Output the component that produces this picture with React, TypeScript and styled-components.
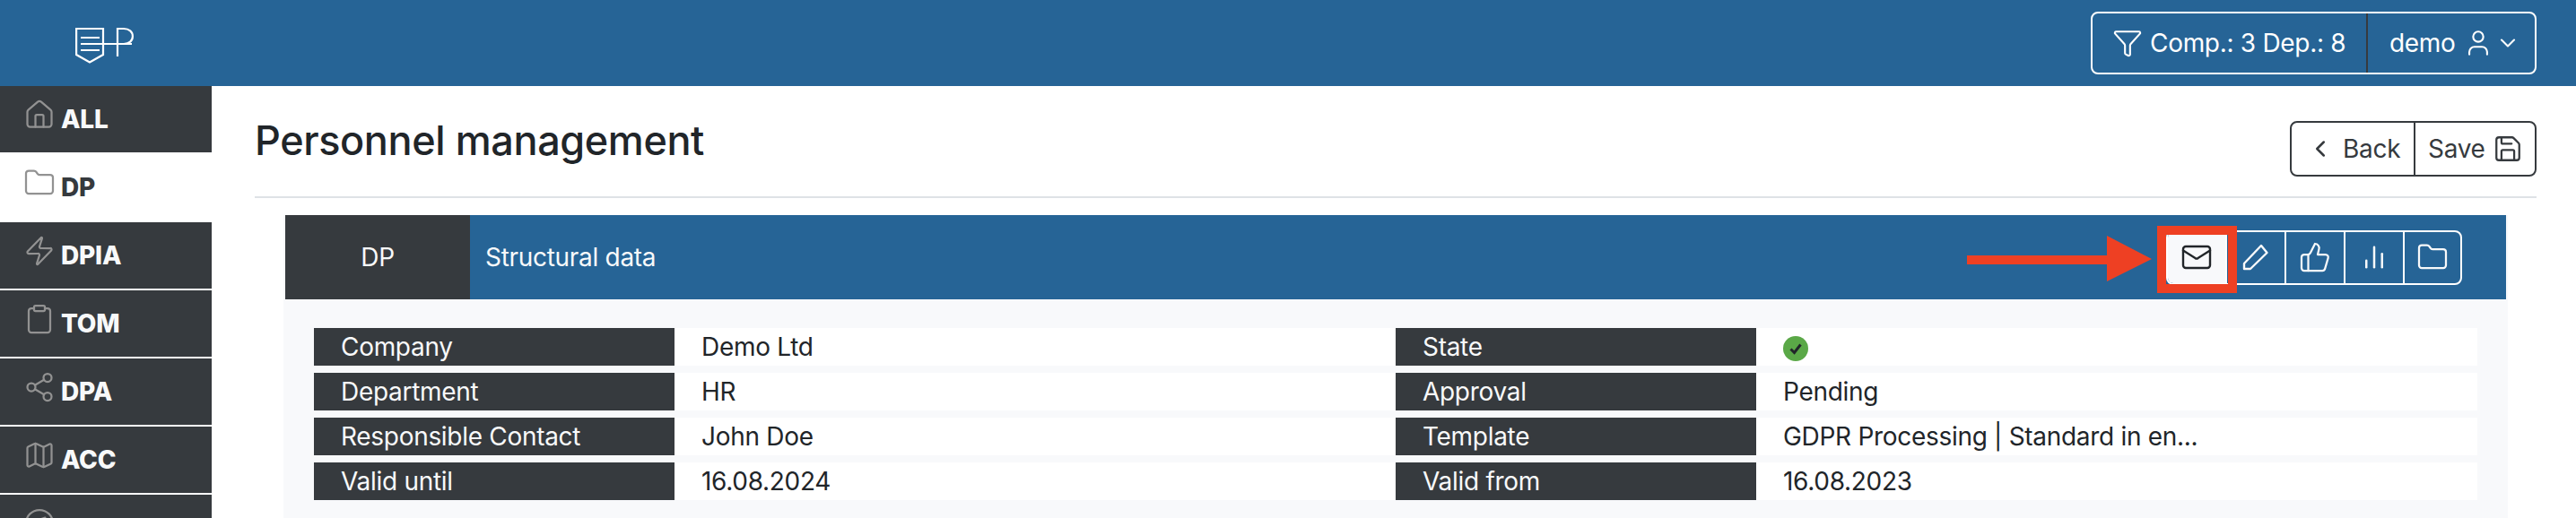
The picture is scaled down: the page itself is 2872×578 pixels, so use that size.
import React from 'react';
import styled, { createGlobalStyle } from 'styled-components';
import {
  ChartNoAxesColumn,
  ChevronDown,
  ChevronLeft,
  Clipboard,
  Compass,
  Folder,
  Funnel,
  House,
  Mail,
  Map as MapIcon,
  Save,
  Share2,
  ThumbsUp,
  User,
  Zap,
} from 'lucide-react';

const GlobalStyle = createGlobalStyle`
  html, body {
    margin: 0;
    height: 578px;
    overflow: hidden;
    background: #fff;
    font-family: Inter, "Liberation Sans", sans-serif;
  }
  * { box-sizing: border-box; }
`;

const BLUE = '#266496';
const DARK = '#363a3e';

const Page = styled.div`
  height: 578px;
  display: flex;
  flex-direction: column;
  overflow: hidden;
`;

const TopBar = styled.header`
  height: 96px;
  flex: none;
  background: ${BLUE};
  display: flex;
  align-items: center;
  justify-content: space-between;
  padding: 0 44px 0 84px;
`;

const Logo = styled.svg`
  width: 66px;
  height: 42px;
  margin-top: 6px;
  fill: none;
  stroke: #fff;
  stroke-width: 2.2;
`;

const BtnGroup = styled.div<{ $color: string; $height: number }>`
  display: flex;
  height: ${p => p.$height}px;
  border: 2px solid ${p => p.$color};
  border-radius: 8px;
  color: ${p => p.$color};
  font-size: 28px;
  letter-spacing: -0.3px;
  overflow: hidden;
`;

const GroupBtn = styled.div<{ $color?: string; $width: number; $pad: number }>`
  width: ${p => p.$width}px;
  padding-left: ${p => p.$pad}px;
  display: flex;
  align-items: center;
  flex: none;
  white-space: nowrap;
  & + & {
    border-left: 2px solid ${p => p.$color || '#fff'};
  }
`;

const Body = styled.div`
  flex: 1;
  display: flex;
  min-height: 0;
`;

const Sidebar = styled.nav`
  width: 236px;
  flex: none;
  display: flex;
  flex-direction: column;
`;

const NavItem = styled.div<{ $active?: boolean }>`
  height: 74px;
  flex: none;
  margin-bottom: 2px;
  padding: 14px 0 0 26px;
  display: flex;
  align-items: flex-start;
  gap: 6px;
  background: ${p => (p.$active ? '#fff' : DARK)};
  color: ${p => (p.$active ? DARK : '#f8f9fa')};
  font-size: 28px;
  font-weight: 800;
  line-height: 42px;
  letter-spacing: -0.2px;
  svg {
    color: #929292;
    flex: none;
  }
  span {
    margin-top: 2px;
  }
`;

const Main = styled.main`
  flex: 1;
  min-width: 0;
  padding: 0 44px 0 48px;
`;

const TitleRow = styled.div`
  height: 125px;
  display: flex;
  align-items: flex-start;
  justify-content: space-between;
  border-bottom: 2px solid #dee2e6;
`;

const Title = styled.h1`
  margin: 33px 0 0;
  font-size: 45px;
  line-height: 56px;
  font-weight: 500;
  color: #212529;
  letter-spacing: -0.4px;
`;

const TitleActions = styled.div`
  margin-top: 39px;
`;

const Card = styled.section`
  margin: 19px 32px 0;
  padding: 0 2px;
  height: 340px;
  background: #f8f9fb;
`;

const CardHeader = styled.div`
  position: relative;
  height: 94px;
  background: ${BLUE};
  display: flex;
  align-items: center;
  color: #f8f9fa;
  font-size: 28px;
  letter-spacing: -0.3px;
`;

const CardTab = styled.div`
  width: 206px;
  align-self: stretch;
  background: ${DARK};
  display: flex;
  align-items: center;
  justify-content: center;
`;

const CardTitle = styled.div`
  flex: 1;
  padding-left: 17px;
`;

const Toolbar = styled.div`
  display: flex;
  height: 61px;
  margin-right: 49px;
  border: 2px solid #fff;
  border-radius: 8px;
  overflow: hidden;
`;

const ToolBtn = styled.div<{ $active?: boolean }>`
  width: 66px;
  display: flex;
  align-items: center;
  justify-content: center;
  background: ${p => (p.$active ? '#f8f9fb' : 'transparent')};
  color: ${p => (p.$active ? '#212529' : '#f8f9fa')};
  & + & {
    border-left: 2px solid #fff;
  }
  &:first-child,
  &:last-child {
    width: 64px;
  }
`;

const Highlight = styled.div`
  position: absolute;
  top: 12px;
  right: 300px;
  width: 89px;
  height: 75px;
  border: 10px solid #ee4023;
`;

const Arrow = styled.svg`
  position: absolute;
  top: 23px;
  right: 395px;
  width: 206px;
  height: 51px;
  fill: #ee4023;
`;

const Details = styled.div`
  padding: 32px;
  display: grid;
  grid-template-columns: 402px 804px 402px 804px;
  grid-auto-rows: 42px;
  row-gap: 8px;
  font-size: 28px;
  line-height: 42px;
  letter-spacing: -0.3px;
`;

const Label = styled.div`
  background: ${DARK};
  color: #f8f9fa;
  padding-left: 30px;
`;

const Value = styled.div`
  background: #fff;
  color: #212529;
  padding-left: 30px;
  display: flex;
  align-items: center;
`;

const StateDot = styled.span`
  width: 28px;
  height: 28px;
  margin-top: 3px;
  border-radius: 50%;
  background: #5aa847;
  display: flex;
  align-items: center;
  justify-content: center;
`;

const Logomark = () => (
  <Logo viewBox="0 0 66 42">
    <path d="M1.1 2H31V31L16 39.5 1.1 31Z" />
    <path d="M6 12H27M6 19H63M6 26H27" />
    <path d="M47 1V33M47 2H54C60 2 63.9 5.5 63.9 10.5 63.9 15.5 60 19 54 19" />
  </Logo>
);

const navItems = [
  { label: 'ALL', icon: House },
  { label: 'DP', icon: Folder, active: true },
  { label: 'DPIA', icon: Zap },
  { label: 'TOM', icon: Clipboard },
  { label: 'DPA', icon: Share2 },
  { label: 'ACC', icon: MapIcon },
  { label: '', icon: Compass },
];

const details = [
  ['Company', 'Demo Ltd', 'State', null],
  ['Department', 'HR', 'Approval', 'Pending'],
  ['Responsible Contact', 'John Doe', 'Template', 'GDPR Processing | Standard in en...'],
  ['Valid until', '16.08.2024', 'Valid from', '16.08.2023'],
];

export default function App() {
  return (
    <Page>
      <GlobalStyle />
      <TopBar>
        <Logomark />
        <BtnGroup $color="#ffffff" $height={70}>
          <GroupBtn $width={305} $pad={22}>
            <Funnel size={34} strokeWidth={1.5} />
            <span style={{ marginLeft: 8 }}>Comp.: 3 Dep.: 8</span>
          </GroupBtn>
          <GroupBtn $width={188} $pad={24}>
            demo
            <User size={34} strokeWidth={1.5} style={{ marginLeft: 8 }} />
            <ChevronDown size={28} strokeWidth={1.8} style={{ marginLeft: 2 }} />
          </GroupBtn>
        </BtnGroup>
      </TopBar>
      <Body>
        <Sidebar>
          {navItems.map(item => (
            <NavItem key={item.label || 'more'} $active={item.active}>
              <item.icon size={36} strokeWidth={1.5} />
              <span>{item.label}</span>
            </NavItem>
          ))}
        </Sidebar>
        <Main>
          <TitleRow>
            <Title>Personnel management</Title>
            <TitleActions>
              <BtnGroup $color={DARK} $height={62}>
                <GroupBtn $color={DARK} $width={136} $pad={17}>
                  <ChevronLeft size={30} strokeWidth={2} />
                  <span style={{ marginLeft: 10 }}>Back</span>
                </GroupBtn>
                <GroupBtn $color={DARK} $width={135} $pad={14}>
                  Save
                  <Save size={34} strokeWidth={1.6} style={{ marginLeft: 8 }} />
                </GroupBtn>
              </BtnGroup>
            </TitleActions>
          </TitleRow>
          <Card>
            <CardHeader>
              <CardTab>DP</CardTab>
              <CardTitle>Structural data</CardTitle>
              <Toolbar>
                <ToolBtn $active>
                  <Mail size={36} strokeWidth={1.6} />
                </ToolBtn>
                <ToolBtn>
                  <svg width="30" height="30" viewBox="0 0 30 30" fill="none" stroke="currentColor" strokeWidth="2.4" strokeLinejoin="round">
                    <path d="M2 22 21 2 27.5 10 9 28H2Z" />
                  </svg>
                </ToolBtn>
                <ToolBtn>
                  <ThumbsUp size={36} strokeWidth={1.5} />
                </ToolBtn>
                <ToolBtn>
                  <ChartNoAxesColumn size={30} strokeWidth={2} />
                </ToolBtn>
                <ToolBtn>
                  <Folder size={36} strokeWidth={1.5} />
                </ToolBtn>
              </Toolbar>
              <Arrow viewBox="0 0 206 51">
                <path d="M0 22H156V0L206 26 156 51V32H0Z" />
              </Arrow>
              <Highlight />
            </CardHeader>
            <Details>
              {details.map(([a, b, c, d]) => (
                <React.Fragment key={a}>
                  <Label>{a}</Label>
                  <Value>{b}</Value>
                  <Label>{c}</Label>
                  <Value>
                    {d ?? (
                      <StateDot>
                        <svg width="16" height="16" viewBox="0 0 16 16" fill="none" stroke="#212529" strokeWidth="3">
                          <path d="M2.5 8.5 6.5 12.5 13.5 3.5" />
                        </svg>
                      </StateDot>
                    )}
                  </Value>
                </React.Fragment>
              ))}
            </Details>
          </Card>
        </Main>
      </Body>
    </Page>
  );
}
